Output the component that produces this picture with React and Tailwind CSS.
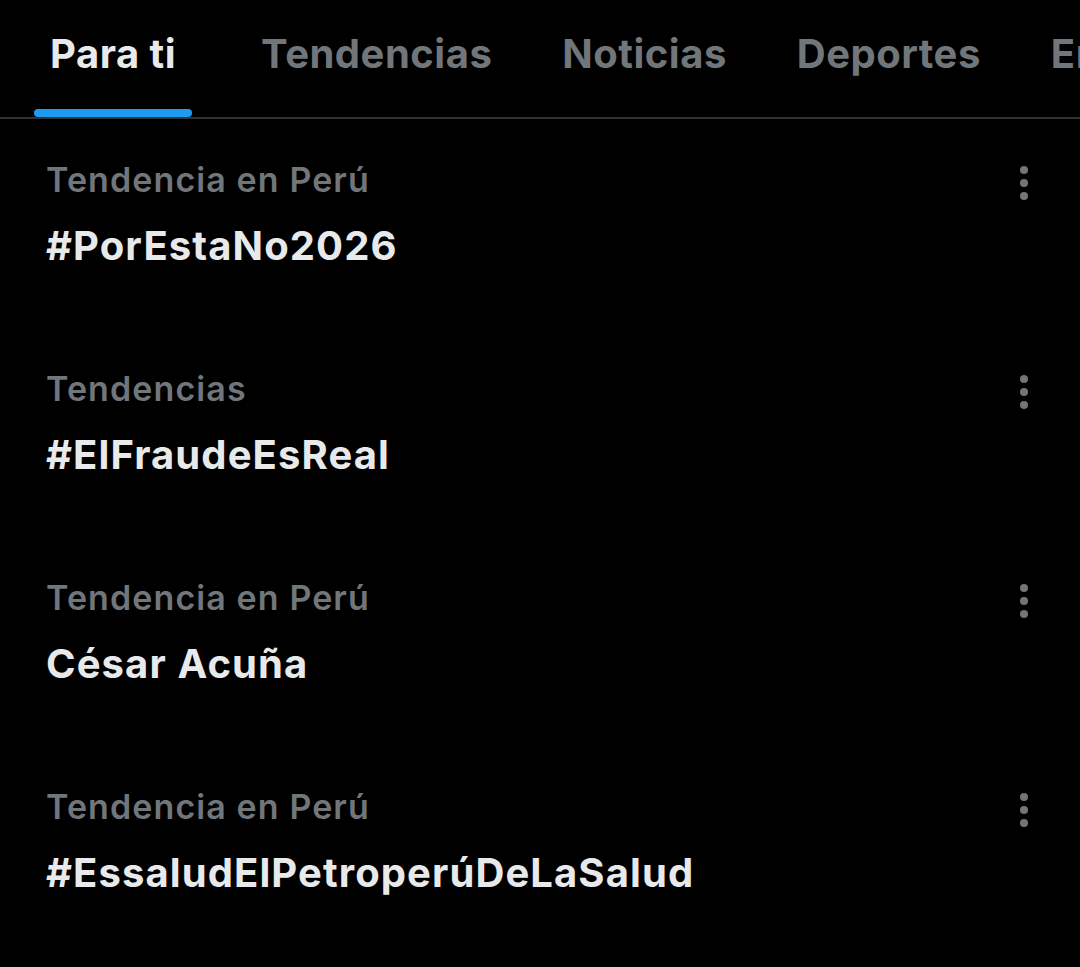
import React, { useState } from "react";

const TABS = ["Para ti", "Tendencias", "Noticias", "Deportes", "Entretenimiento"];

const TRENDS = [
  { context: "Tendencia en Perú", title: "#PorEstaNo2026" },
  { context: "Tendencias", title: "#ElFraudeEsReal" },
  { context: "Tendencia en Perú", title: "César Acuña" },
  { context: "Tendencia en Perú", title: "#EssaludElPetroperúDeLaSalud" },
];

function MoreIcon() {
  return (
    <svg width="10" height="36" viewBox="0 0 10 36" fill="#71767b">
      <circle cx="5" cy="5" r="4" />
      <circle cx="5" cy="18" r="4" />
      <circle cx="5" cy="31" r="4" />
    </svg>
  );
}

function TrendRow({ trend }) {
  return (
    <div className="flex items-start justify-between pl-[46px] pr-[51px] h-[209px]">
      <div className="flex flex-col">
        <span className="text-[34px] leading-[40px] font-semibold text-[#71767b] tracking-[1.1px]">
          {trend.context}
        </span>
        <span className="mt-[24px] text-[40px] leading-[44px] font-bold text-[#e7e9ea] tracking-[1.1px]">
          {trend.title}
        </span>
      </div>
      <div className="pt-[5px]">
        <MoreIcon />
      </div>
    </div>
  );
}

export default function App() {
  const [active, setActive] = useState(0);

  return (
    <div
      className="w-[1080px] h-[967px] bg-black overflow-hidden"
      style={{ fontFamily: "Inter, 'Noto Sans', sans-serif" }}
    >
      {/* Tabs */}
      <div className="flex border-b-2 border-[#2f3336] h-[119px] pl-[34px] gap-[38px] whitespace-nowrap">
        {TABS.map((tab, i) => (
          <button
            key={tab}
            onClick={() => setActive(i)}
            className={`relative flex items-start pt-[30px] px-[16px] shrink-0 ${i === 1 ? "ml-[15px]" : ""}`}
          >
            <span
              className={`text-[40px] leading-[48px] font-bold tracking-[0.5px] ${
                i === active ? "text-[#e7e9ea]" : "text-[#71767b]"
              }`}
            >
              {tab}
            </span>
            {i === active && (
              <span className="absolute left-0 right-0 bottom-0 h-[8px] rounded-full bg-[#1d9bf0]" />
            )}
          </button>
        ))}
      </div>

      {/* Trend list */}
      <div className="pt-[41px]">
        {TRENDS.map((t, i) => (
          <TrendRow key={i} trend={t} />
        ))}
      </div>
    </div>
  );
}
